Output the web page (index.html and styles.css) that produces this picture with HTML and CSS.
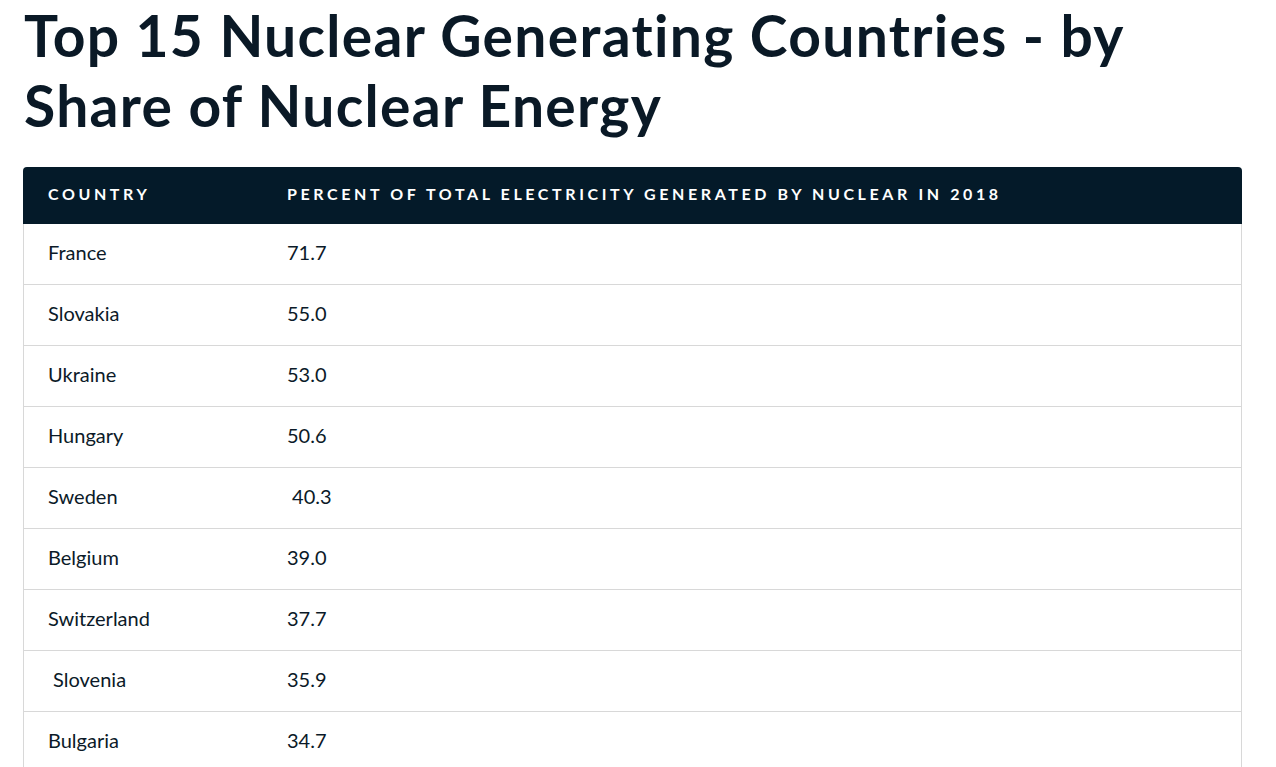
FILE: index.html
```html
<!DOCTYPE html>
<html lang="en">
<head>
<meta charset="utf-8">
<title>Top 15 Nuclear Generating Countries</title>
<link rel="stylesheet" href="styles.css">
</head>
<body>
<main class="page">
  <h1 class="title">Top 15 Nuclear Generating Countries - by Share of Nuclear Energy</h1>
  <table class="data">
    <colgroup><col class="col-country"><col class="col-value"></colgroup>
    <thead>
      <tr><th>Country</th><th>Percent of total electricity generated by nuclear in 2018</th></tr>
    </thead>
    <tbody>
      <tr><td>France</td><td>71.7</td></tr>
      <tr><td>Slovakia</td><td>55.0</td></tr>
      <tr><td>Ukraine</td><td>53.0</td></tr>
      <tr><td>Hungary</td><td>50.6</td></tr>
      <tr><td>Sweden</td><td>&nbsp;40.3</td></tr>
      <tr><td>Belgium</td><td>39.0</td></tr>
      <tr><td>Switzerland</td><td>37.7</td></tr>
      <tr><td>&nbsp;Slovenia</td><td>35.9</td></tr>
      <tr><td>Bulgaria</td><td>34.7</td></tr>
      <tr><td>Finland</td><td>32.4</td></tr>
    </tbody>
  </table>
</main>
</body>
</html>
```

FILE: styles.css
```css
html, body {
  margin: 0;
  padding: 0;
  background: #ffffff;
}
body {
  font-family: "Lato", "Open Sans", "Liberation Sans", sans-serif;
  color: #0b1a28;
  font-variant-ligatures: none;
}
.page {
  padding: 0 34px 0 23px;
}
.title {
  margin: 0 0 27px 1px;
  font-size: 57px;
  line-height: 70px;
  font-weight: 700;
  letter-spacing: 1.3px;
  color: #0a1926;
  max-width: 1150px;
  font-variant-ligatures: none;
}
.data {
  width: 1219px;
  table-layout: fixed;
  border-collapse: separate;
  border-spacing: 0;
}
.col-country {
  width: 239px;
}
.data th {
  background: #041a29;
  color: #ffffff;
  text-align: left;
  text-transform: uppercase;
  font-size: 16px;
  font-weight: 700;
  letter-spacing: 3.6px;
  height: 57px;
  padding: 0 0 5px 25px;
  box-sizing: border-box;
  white-space: nowrap;
}
.data th:first-child {
  border-top-left-radius: 4px;
}
.data th:last-child {
  border-top-right-radius: 4px;
}
.data td {
  height: 61px;
  box-sizing: border-box;
  padding: 0 0 4px 25px;
  font-size: 20px;
  color: #0b1a28;
  border-bottom: 1px solid #d8d8d8;
}
.data td:first-child {
  border-left: 1px solid #d8d8d8;
  padding-left: 24px;
}
.data td:last-child {
  border-right: 1px solid #d8d8d8;
}
```
